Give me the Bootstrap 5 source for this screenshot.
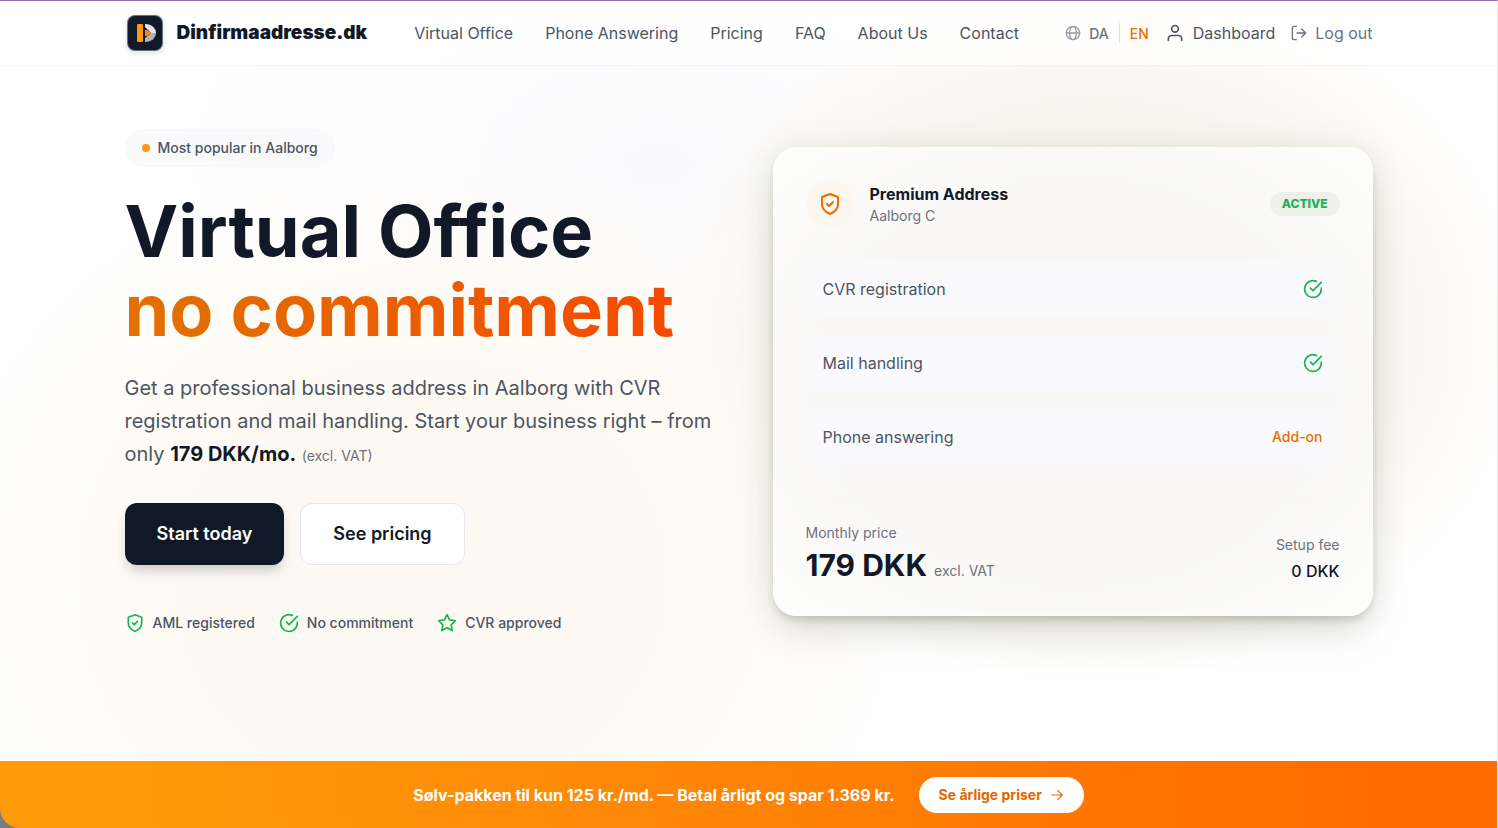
<!DOCTYPE html>
<html lang="en">
<head>
<meta charset="utf-8">
<meta name="viewport" content="width=device-width, initial-scale=1">
<title>Dinfirmaadresse.dk</title>
<link href="https://cdn.jsdelivr.net/npm/bootstrap@5.3.0/dist/css/bootstrap.min.css" rel="stylesheet">
<style>
  :root { --ink: #111827; --slate: #4b5563; --muted: #6b7280; --brand: #ea6c00; --ok: #16b355; }
  body {
    font-family: Inter, "Liberation Sans", sans-serif;
    color: var(--ink);
    border-top: 1px solid #8f6bb3;
    border-right: 1px solid #e8e8e8;
    background:
      radial-gradient(ellipse 430px 350px at 73% 40%, #f3f2e8 0%, #f7f6ee 65%, rgba(252,249,242,.7) 85%, rgba(255,255,255,0) 100%),
      radial-gradient(ellipse 480px 430px at 28% 70%, #fbf9f2 0%, #fefaf3 50%, rgba(255,251,246,.6) 80%, rgba(255,255,255,0) 100%),
      radial-gradient(ellipse 480px 300px at 44% 20%, #fafafc 0%, rgba(255,255,255,0) 100%),
      #fff;
  }
  a { text-decoration: none; }
  svg { fill: none; stroke: currentColor; stroke-width: 2; stroke-linecap: round; stroke-linejoin: round; flex: none; }
  .wrap { max-width: 1280px; padding-left: 16px; padding-right: 16px; }
  .site-head { border-bottom: 1px solid #f5f5f6; background: rgba(255,255,255,.7); }
  .head-row { height: 64px; }
  .logo-box { stroke: none; filter: drop-shadow(0 2px 3px rgba(17,24,39,.15)); }
  .brand-name { font-size: 19px; font-weight: 900; color: var(--ink); }
  .main-links { gap: 32px; margin-left: 47px; }
  .main-links a, .account a { color: var(--slate); }
  .account { margin-left: auto; gap: 16px; }
  .account .lang { font-size: 14px; font-weight: 500; gap: 8px; color: var(--muted); }
  .account .lang a { color: var(--muted); }
  .account .lang .current { color: var(--brand); }
  .lang svg { opacity: .7; }
  .lang .bar { width: 1px; height: 20px; background: #e0e0e0; margin: 0 2px; }
  .account .quiet { color: var(--muted); }
  .hero { padding-top: 63px; padding-bottom: 64px; }
  .tagline { height: 38px; padding: 0 16px; gap: 8px; font-size: 14px; line-height: 20px; font-weight: 500; color: var(--slate); background: #fafafc; border: 1px solid #f8f8fa; }
  .tagline i { width: 8px; height: 8px; border-radius: 50%; background: #fd9810; }
  h1 { font-size: 72px; line-height: 79px; font-weight: 700; margin: 24px 0 23px; }
  h1 span { background: linear-gradient(90deg, #e17100, #f54a00); -webkit-background-clip: text; background-clip: text; color: transparent; }
  .intro { font-size: 20px; line-height: 33px; color: var(--slate); margin-bottom: 32px; }
  .intro strong { color: var(--ink); }
  .intro small { font-size: 14px; line-height: 1; color: var(--muted); }
  .cta { height: 62px; padding: 0 32px; border-radius: 12px; font-size: 18px; line-height: 26px; font-weight: 600; }
  .cta-dark, .cta-dark:hover { background: var(--ink); color: #fff; border: 0; box-shadow: 0 8px 12px -2px rgba(17,24,39,.2); }
  .cta-light, .cta-light:hover { background: #fff; color: var(--ink); border: 1px solid #e5e7eb; }
  .perks { gap: 24px; margin-top: 48px; font-size: 14px; line-height: 20px; font-weight: 500; color: var(--slate); }
  .perks svg { color: var(--ok); }
  .offer { border: 1px solid rgba(255,255,255,.6); border-radius: 24px; padding: 32px;
    background: radial-gradient(ellipse at center, #f8f7f5 0%, #f9f8f6 55%, #fdfdfc 100%);
    box-shadow: 0 20px 44px -8px rgba(80,90,60,.2), 0 0 32px rgba(80,90,60,.1), 0 6px 8px -2px rgba(60,60,60,.2); }
  .offer-icon { width: 48px; height: 48px; border-radius: 50%; background: #fcf8f1; color: var(--brand); }
  .offer h2 { font-size: 16px; line-height: 24px; font-weight: 700; margin: 0; }
  .note { font-size: 14px; line-height: 20px; color: var(--muted); }
  .state { font-size: 12px; line-height: 24px; font-weight: 800; padding: 0 12px; color: var(--ok); background: #eef0e9; }
  .features { gap: 18px; margin: 33px 0; }
  .features li { height: 56px; padding: 0 17px; border-radius: 12px; background: #fafafc; color: var(--slate); }
  .features svg { color: var(--ok); }
  .addon { font-size: 14px; font-weight: 500; color: var(--brand); }
  .totals { border-top: 1px solid #f7f6f5; padding-top: 24px; }
  .price { font-size: 30px; line-height: 36px; font-weight: 700; margin-top: 4px; }
  .price small { font-size: 14px; line-height: 1; font-weight: 400; color: var(--muted); }
  .promo { padding: 16px 0 15px; color: #fff; font-weight: 700; background: linear-gradient(90deg, #ff9a0a 0%, #ff9a0a 10%, #ff6b00 92%); border-radius: 0 0 0 20px; }
  .promo-corner { background: #747d83; }
  .promo-btn, .promo-btn:hover { height: 36px; padding: 0 20px; font-size: 14px; line-height: 20px; font-weight: 700; color: #e06500; background: #fff; border: 0; }
</style>
</head>
<body class="min-vh-100 d-flex flex-column">
<header class="site-head">
  <nav class="container-fluid wrap head-row d-flex align-items-center" aria-label="Main">
    <a href="#" class="d-flex align-items-center gap-2">
      <svg class="logo-box" width="40" height="40" viewBox="0 0 40 40">
        <rect x="2" y="2" width="36" height="36" rx="8" fill="#69717f"/>
        <rect x="3" y="3" width="34" height="34" rx="7" fill="#111827"/>
        <rect x="12" y="11" width="6" height="18" rx="1" fill="#fd9810"/>
        <path d="M20 11h1a10 9 0 0 1 10 9H20z" fill="#e4e4e4"/>
        <path d="M20 29h1a10 9 0 0 0 10-9H20z" fill="#b0b3b8"/>
        <path d="M20 14l6 6-6 5z" fill="#111827"/>
        <path d="M20 17h2l4 3-4 3h-2z" fill="#fd850b"/>
      </svg>
      <span class="brand-name ms-1">Dinfirmaadresse.dk</span>
    </a>
    <div class="main-links d-flex">
      <a href="#">Virtual Office</a><a href="#">Phone Answering</a><a href="#">Pricing</a><a href="#">FAQ</a><a href="#">About Us</a><a href="#">Contact</a>
    </div>
    <div class="account d-flex align-items-center">
      <div class="lang d-flex align-items-center">
        <svg width="16" height="16" viewBox="0 0 24 24"><circle cx="12" cy="12" r="10"/><ellipse cx="12" cy="12" rx="5" ry="10"/><path d="M2 12h20"/></svg>
        <a href="#">DA</a><span class="bar"></span><a href="#" class="current">EN</a>
      </div>
      <a href="#" class="d-flex align-items-center gap-2">
        <svg width="20" height="20" viewBox="0 0 24 24"><circle cx="12" cy="7" r="4"/><path d="M4 21v-2a4 4 0 0 1 4-4h8a4 4 0 0 1 4 4v2"/></svg>Dashboard</a>
      <a href="#" class="quiet d-flex align-items-center gap-2">
        <svg width="16" height="16" viewBox="0 0 24 24"><path d="M8 2H5a3 3 0 0 0-3 3v14a3 3 0 0 0 3 3h3M9 12h13M16 6l6 6-6 6"/></svg>Log out</a>
    </div>
  </nav>
</header>

<main class="container-fluid wrap hero">
  <div class="row gx-5 align-items-center">
    <section class="col-lg-6">
      <div class="tagline rounded-pill d-inline-flex align-items-center"><i></i>Most popular in Aalborg</div>
      <h1>Virtual Office<br><span>no commitment</span></h1>
      <p class="intro">Get a professional business address in Aalborg with CVR registration and mail handling. Start your business right – from only <strong>179 DKK/mo.</strong> <small>(excl. VAT)</small></p>
      <div class="d-flex gap-3">
        <button type="button" class="btn cta cta-dark">Start today</button>
        <button type="button" class="btn cta cta-light">See pricing</button>
      </div>
      <div class="perks d-flex">
        <span class="d-flex gap-2"><svg width="20" height="20" viewBox="0 0 24 24"><path d="M12 2l8 3v7c0 5-3 8-8 10-5-2-8-5-8-10V5zM9 12l2 2 4-4"/></svg>AML registered</span>
        <span class="d-flex gap-2"><svg width="20" height="20" viewBox="0 0 24 24"><path d="M22 11v1a10 10 0 1 1-6-9.140M22 4L12 14l-3-3"/></svg>No commitment</span>
        <span class="d-flex gap-2"><svg width="20" height="20" viewBox="0 0 24 24"><path d="M12 2l3.100 6.300 6.900 1-5 4.900 1.200 6.900-6.200-3.300-6.200 3.300L7 14.200 2 9.300l6.900-1z"/></svg>CVR approved</span>
      </div>
    </section>

    <section class="col-lg-6">
      <article class="offer">
        <div class="d-flex align-items-center gap-3">
          <span class="offer-icon d-flex align-items-center justify-content-center"><svg width="24" height="24" viewBox="0 0 24 24"><path d="M12 2l8 3v7c0 5-3 8-8 10-5-2-8-5-8-10V5zM9 12l2 2 4-4"/></svg></span>
          <div><h2>Premium Address</h2><div class="note">Aalborg C</div></div>
          <span class="state rounded-pill ms-auto">ACTIVE</span>
        </div>
        <ul class="features list-unstyled d-flex flex-column">
          <li class="d-flex align-items-center justify-content-between">CVR registration<svg width="20" height="20" viewBox="0 0 24 24"><path d="M22 11v1a10 10 0 1 1-6-9.140M22 4L12 14l-3-3"/></svg></li>
          <li class="d-flex align-items-center justify-content-between">Mail handling<svg width="20" height="20" viewBox="0 0 24 24"><path d="M22 11v1a10 10 0 1 1-6-9.140M22 4L12 14l-3-3"/></svg></li>
          <li class="d-flex align-items-center justify-content-between">Phone answering<span class="addon">Add-on</span></li>
        </ul>
        <div class="totals d-flex justify-content-between align-items-end">
          <div><div class="note">Monthly price</div><div class="price">179 DKK <small>excl. VAT</small></div></div>
          <div class="text-end"><div class="note mb-1">Setup fee</div><div class="fw-medium">0 DKK</div></div>
        </div>
      </article>
    </section>
  </div>
</main>

<div class="promo-corner mt-auto">
  <aside class="promo d-flex justify-content-center align-items-center gap-4">
    <span>Sølv-pakken til kun 125 kr./md. — Betal årligt og spar 1.369 kr.</span>
    <button type="button" class="btn promo-btn rounded-pill d-flex align-items-center gap-2">Se årlige priser<svg width="14" height="14" viewBox="0 0 24 24"><path d="M3 12h18M13 4l8 8-8 8"/></svg></button>
  </aside>
</div>
<script src="https://cdn.jsdelivr.net/npm/bootstrap@5.3.0/dist/js/bootstrap.bundle.min.js"></script>
</body>
</html>
